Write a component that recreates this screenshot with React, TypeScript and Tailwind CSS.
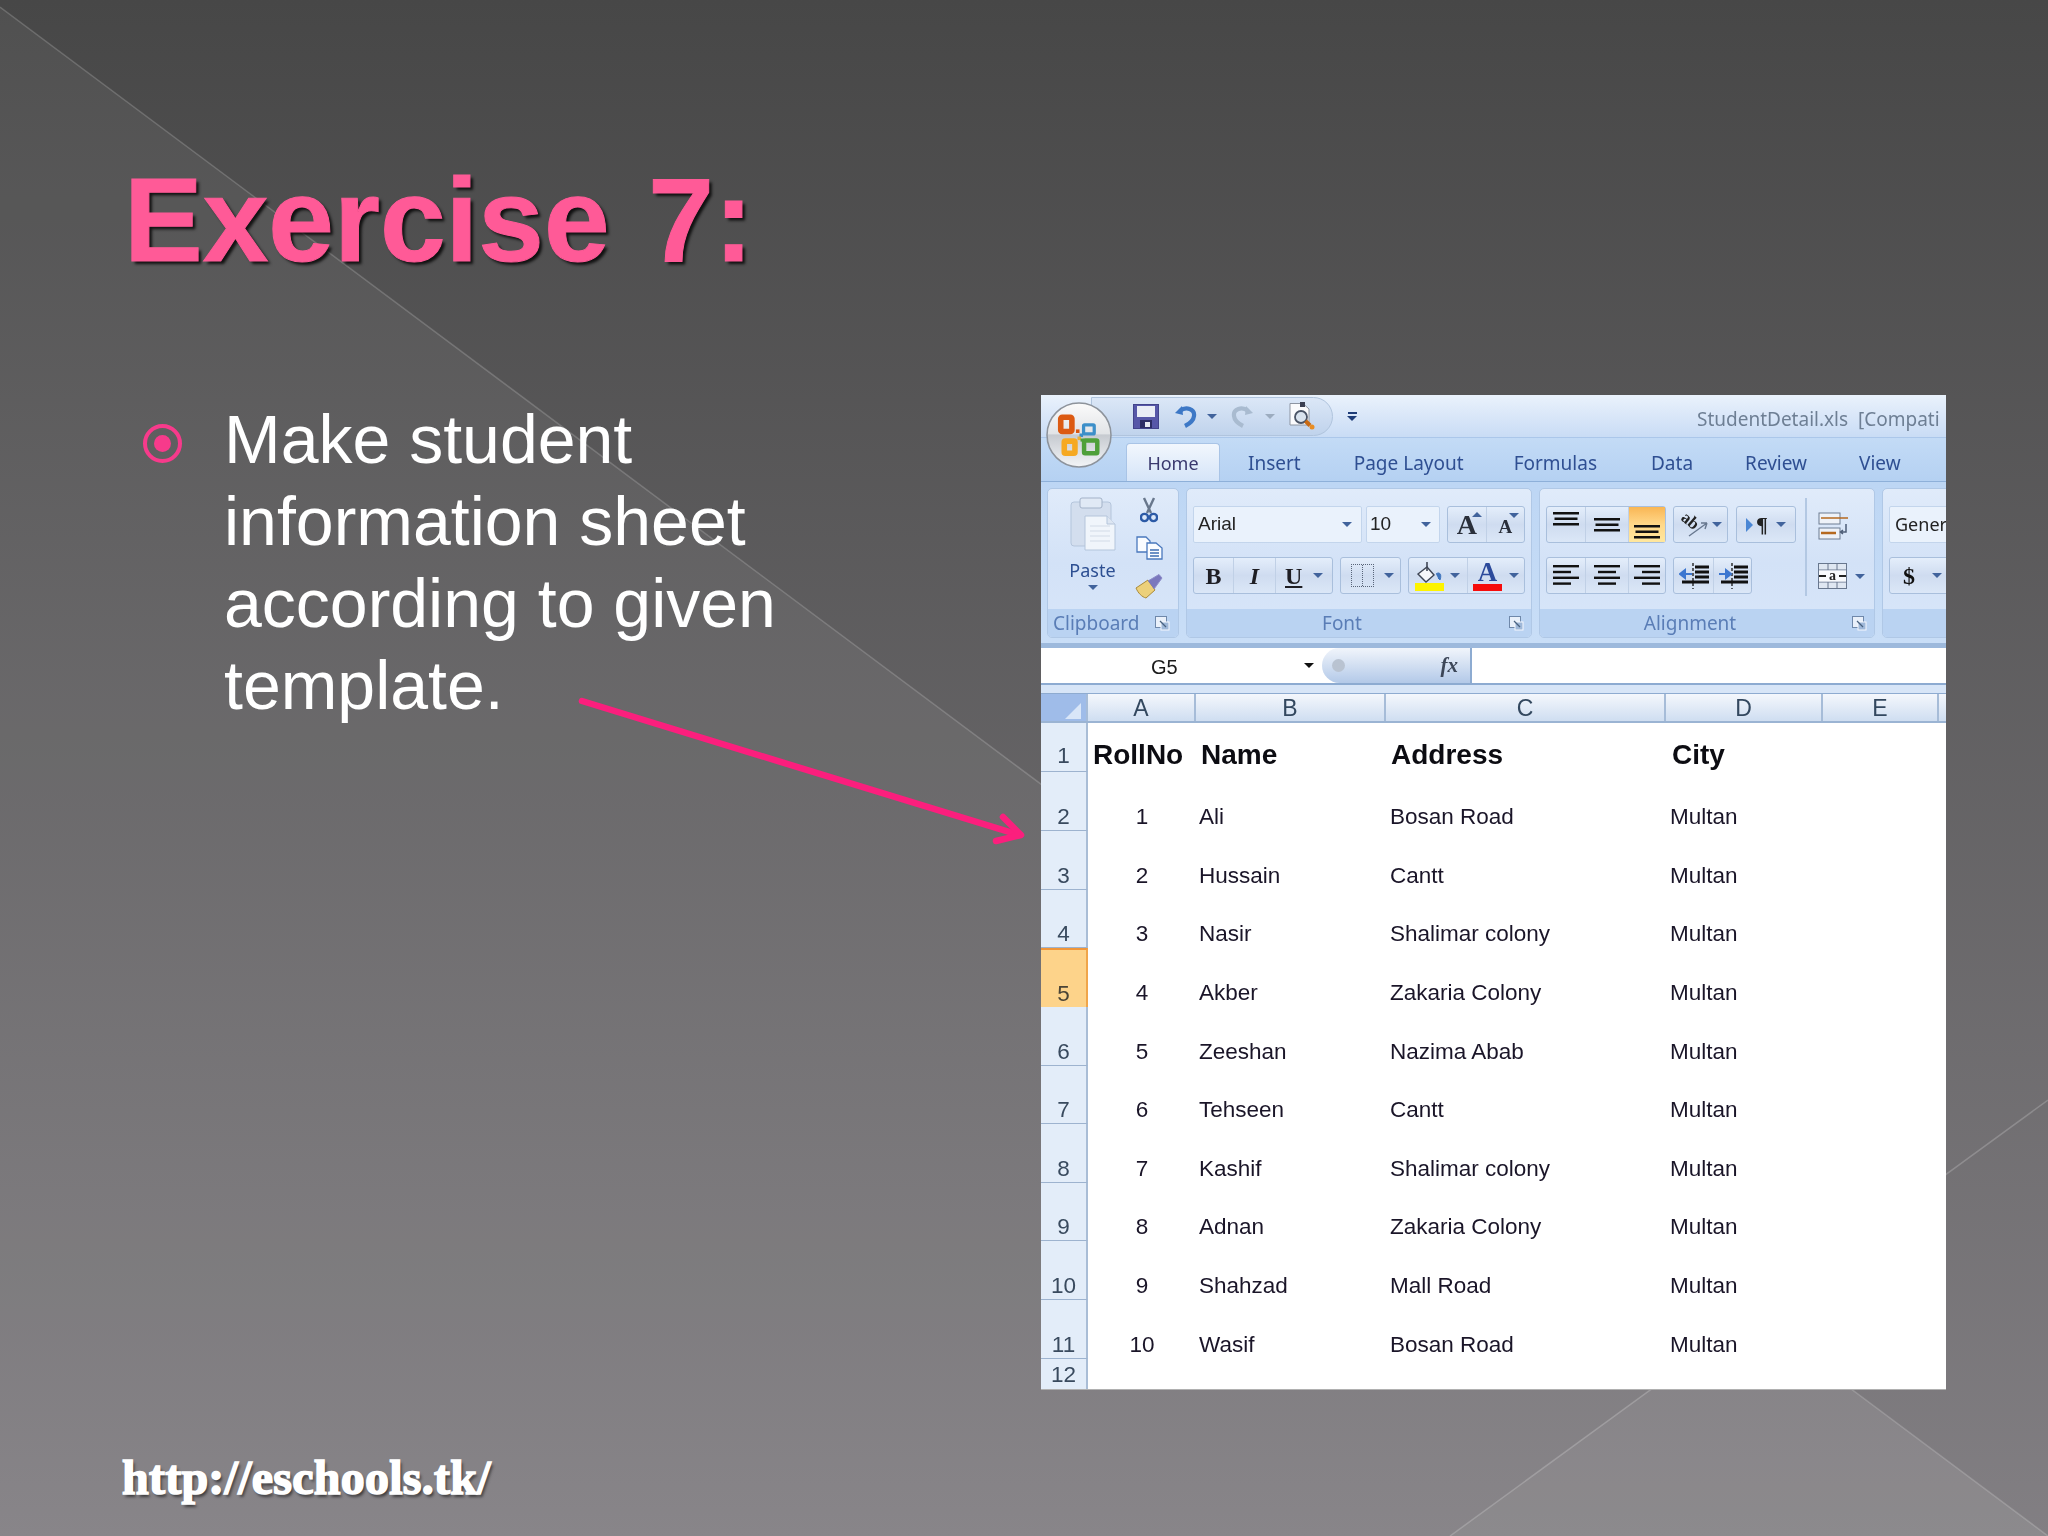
import React from "react";

const UI = "font-['Noto_Sans','Open_Sans',sans-serif]";

function Backdrop() {
  return (
    <svg className="absolute inset-0" width="2048" height="1536" viewBox="0 0 2048 1536">
      <polygon points="0,7 1752,1315 1450,1536 0,1536" fill="#fff" opacity="0.05" />
      <polygon points="1752,1315 2048,1536 1450,1536" fill="#fff" opacity="0.085" />
      <line x1="0" y1="7" x2="2048" y2="1536" stroke="#fff" strokeOpacity="0.18" strokeWidth="1.5" />
      <line x1="1450" y1="1536" x2="2048" y2="1100" stroke="#fff" strokeOpacity="0.2" strokeWidth="1.5" />
    </svg>
  );
}

function Arrow() {
  return (
    <svg className="absolute left-[570px] top-[690px]" width="470" height="165" viewBox="570 690 470 165">
      <g stroke="#fb1f7d" strokeWidth="6.5" fill="none" strokeLinecap="round" strokeLinejoin="round">
        <line x1="582" y1="701" x2="1019" y2="835" />
        <polyline points="1003,817 1021,835 996,841" />
      </g>
    </svg>
  );
}

function Caret({ up = false, color = "border-t-[#41639c]" }: { up?: boolean; color?: string }) {
  return <span className={`inline-block h-0 w-0 border-x-[5px] border-t-[5px] border-x-transparent ${color} ${up ? "rotate-180" : ""}`} />;
}

function OfficeButton() {
  return (
    <svg className="absolute left-[5px] top-[7px]" width="66" height="66" viewBox="0 0 65 65">
      <defs>
        <linearGradient id="orb" x1="0" y1="0" x2="0" y2="1">
          <stop offset="0" stopColor="#fbfbfb" />
          <stop offset="0.48" stopColor="#e2e4e7" />
          <stop offset="0.5" stopColor="#c6cad0" />
          <stop offset="1" stopColor="#f3f5f7" />
        </linearGradient>
      </defs>
      <circle cx="32.5" cy="32.5" r="31.5" fill="url(#orb)" stroke="#8d939b" strokeWidth="1.5" />
      <g fill="none">
        <rect x="14.5" y="15" width="11" height="14" rx="1.5" stroke="#dc5a12" strokeWidth="5.5" />
        <rect x="37" y="22.5" width="10.5" height="9" rx="1" stroke="#3c8fc9" strokeWidth="3.2" />
        <rect x="18" y="38.5" width="10.5" height="12" rx="1" stroke="#f6a922" strokeWidth="5.5" />
        <rect x="37.5" y="38" width="13" height="12.5" rx="1" stroke="#4fa03a" strokeWidth="4.4" />
      </g>
      <rect x="29.5" y="27" width="3.5" height="3.5" fill="#d9560f" />
      <rect x="33" y="31" width="3.5" height="3.5" fill="#3c8fc9" />
      <rect x="31" y="34" width="3.5" height="3.5" fill="#e8b23a" />
      <rect x="34" y="36" width="3" height="3" fill="#4fa03a" />
    </svg>
  );
}

function SaveIcon() {
  return (
    <svg width="26" height="25" viewBox="0 0 26 25">
      <rect x="0.5" y="0.5" width="25" height="24" fill="#5657a8" stroke="#42448c" />
      <rect x="4" y="2" width="18" height="11" fill="#e9edf6" />
      <rect x="7" y="16" width="12" height="8" fill="#2d2e66" />
      <rect x="12" y="18" width="5" height="5" fill="#e8ebf3" />
    </svg>
  );
}

function UndoIcon({ color = "#3d78c6" }: { color?: string }) {
  return (
    <svg width="23" height="24" viewBox="0 0 23 24" fill="none">
      <path d="M8 2 L1 9 L9 11 Z" fill={color} />
      <path d="M6 7 C 12 2, 21 5, 20 12 C 19.5 17, 15 20, 11 22" stroke={color} strokeWidth="4.2" />
    </svg>
  );
}

function PreviewIcon() {
  return (
    <svg width="28" height="28" viewBox="0 0 28 28" fill="none">
      <path d="M1 1.5 H14 L20 7 V23 H1 Z" fill="#fafbfd" stroke="#8d95a2" />
      <rect x="11" y="0" width="5" height="5" fill="#3a3f52" />
      <circle cx="12" cy="15" r="6" fill="#d9e3ee" stroke="#4a5466" strokeWidth="1.8" />
      <path d="M16.5 19 L21 23.5" stroke="#c96a14" strokeWidth="4" />
      <circle cx="23" cy="25" r="2.5" fill="#e98d23" />
    </svg>
  );
}

function PasteIcon() {
  return (
    <svg width="46" height="54" viewBox="0 0 46 54" fill="none">
      <rect x="1" y="5" width="40" height="44" rx="3" fill="#d3deee" stroke="#b4c5db" />
      <rect x="10" y="1" width="22" height="10" rx="2" fill="#e0e9f5" stroke="#a3b2c8" />
      <path d="M15 19 H37 L45 27 V53 H15 Z" fill="#f0f5fb" stroke="#b4c5db" />
      <path d="M37 19 V27 H45" fill="#dde6f2" stroke="#b4c5db" />
      <path d="M20 29 H40 M20 34 H40 M20 39 H40 M20 44 H40" stroke="#d2dbe8" strokeWidth="1.2" />
    </svg>
  );
}

function ScissorsIcon() {
  return (
    <svg width="18" height="26" viewBox="0 0 18 26" fill="none">
      <path d="M4 1 L11 16 M14 1 L7 16" stroke="#68778c" strokeWidth="2.4" />
      <circle cx="4.5" cy="20.5" r="3.6" stroke="#2c5aa6" strokeWidth="2.4" />
      <circle cx="13.5" cy="20.5" r="3.6" stroke="#2c5aa6" strokeWidth="2.4" />
    </svg>
  );
}

function CopyIcon() {
  return (
    <svg width="27" height="24" viewBox="0 0 27 24" fill="none">
      <path d="M1 1 H10 L14 5 V16 H1 Z" fill="#fafcff" stroke="#4a78bd" strokeWidth="1.3" />
      <path d="M11 7 H20 L26 12 V23 H11 Z" fill="#fafcff" stroke="#4a78bd" strokeWidth="1.3" />
      <path d="M14 14 H23 M14 17 H23 M14 20 H23" stroke="#3d6cb2" strokeWidth="1.5" />
    </svg>
  );
}

function BrushIcon() {
  return (
    <svg width="28" height="26" viewBox="0 0 28 26" fill="none">
      <path d="M1 15 L13 7 L20 17 L11 25 C 7 24, 3 20, 1 15 Z" fill="#ecd07a" stroke="#a98a3a" />
      <path d="M13 8 L24 1.5 L27 5 L19 16" fill="#7a78bd" stroke="#8d8cc9" />
    </svg>
  );
}

function Launcher() {
  return (
    <svg width="15" height="15" viewBox="0 0 15 15" fill="none">
      <rect x="0.5" y="0.5" width="11" height="11" fill="#e9f0fa" stroke="#6f88aa" />
      <rect x="6" y="6" width="8" height="8" fill="#9fb8d9" stroke="#f5f8fd" />
      <path d="M5 5 L11 11" stroke="#49627f" strokeWidth="1.3" />
    </svg>
  );
}

function Lines() {
  return (
    <svg width="26" height="14" viewBox="0 0 26 14">
      <rect x="0" y="0" width="26" height="2.5" fill="#111" />
      <rect x="1.5" y="5.5" width="23" height="2.5" fill="#111" />
      <rect x="0" y="11" width="26" height="2.5" fill="#111" />
    </svg>
  );
}

function AlignLines({ kind }: { kind: "left" | "center" | "right" }) {
  const rows = kind === "left"
    ? [[0, 26], [0, 18], [0, 26], [0, 18]]
    : kind === "center"
    ? [[0, 26], [4, 18], [0, 26], [4, 18]]
    : [[0, 26], [8, 18], [0, 26], [8, 18]];
  return (
    <svg width="26" height="21" viewBox="0 0 26 21">
      {rows.map(([x, w], i) => (
        <rect key={i} x={x} y={i * 5.8} width={w} height="2.4" fill="#111" />
      ))}
    </svg>
  );
}

function IndentIcon({ inward }: { inward: boolean }) {
  return (
    <svg width="30" height="28" viewBox="0 0 30 28" fill="none">
      <path d="M14 1 V27" stroke="#222" strokeWidth="1.4" strokeDasharray="3 2" />
      <path d="M16 5 H30 M16 10 H30 M16 15 H30 M3 20 H30" stroke="#111" strokeWidth="2.8" />
      {inward ? (
        <path d="M1 12 H8 M8 8 L13 12 L8 16 Z" stroke="#3b76d0" strokeWidth="2" fill="#3b76d0" />
      ) : (
        <path d="M13 12 H6 M6 8 L1 12 L6 16 Z" stroke="#3b76d0" strokeWidth="2" fill="#3b76d0" />
      )}
    </svg>
  );
}

function WrapIcon() {
  return (
    <svg width="30" height="28" viewBox="0 0 30 28" fill="none">
      <rect x="1" y="1" width="21" height="11" fill="#eef2f8" stroke="#6d7c92" />
      <rect x="1" y="16" width="21" height="11" fill="#eef2f8" stroke="#6d7c92" />
      <path d="M3 6 H30" stroke="#b5691f" strokeWidth="1.6" />
      <path d="M3 21 H18" stroke="#b5691f" strokeWidth="2.6" />
      <path d="M28 12 V20 H23 M25 18 L22.5 20 L25 22" stroke="#4d5d77" strokeWidth="1.5" />
    </svg>
  );
}

function MergeIcon() {
  return (
    <svg width="30" height="26" viewBox="0 0 30 26" fill="none">
      <rect x="0.5" y="0.5" width="28" height="25" fill="#dfe7f2" stroke="#68778e" />
      <path d="M0.5 7 H29 M0.5 19 H29 M10 0.5 V7 M19 0.5 V7 M10 19 V25.5 M19 19 V25.5" stroke="#68778e" />
      <rect x="1" y="7.5" width="27" height="11" fill="#f8fafd" />
      <text x="14.5" y="17" fontSize="14" fontFamily="Liberation Serif" fontWeight="700" textAnchor="middle" fill="#222">a</text>
      <path d="M1 13 H8 M28 13 H21" stroke="#222" strokeWidth="1.8" />
    </svg>
  );
}

function OrientIcon() {
  return (
    <svg className="overflow-visible" width="30" height="26" viewBox="0 0 30 26" fill="none">
      <text x="0" y="13" fontSize="17" fontWeight="700" fontFamily="Liberation Serif" fill="#222" transform="rotate(40 8 10)">ab</text>
      <path d="M9 24 L27 11 M27 11 L21 11 M27 11 L25 17" stroke="#68788f" strokeWidth="1.4" />
    </svg>
  );
}

function FillIcon() {
  return (
    <svg width="30" height="30" viewBox="0 0 30 30" fill="none">
      <path d="M4 13 L13 6 L20 14 L12 21 Z" fill="#f6f7fa" stroke="#3f4655" strokeWidth="1.4" />
      <path d="M13 1 V10" stroke="#3f4655" strokeWidth="1.6" />
      <path d="M22 13 C 26 10, 28 14, 26 19 L24 17" fill="#4176be" stroke="#4176be" />
      <rect x="1" y="22" width="29" height="8" fill="#fdf300" />
    </svg>
  );
}

const seg = "flex items-center justify-center border-r border-r-[#c0d0e6] h-full";
const vseg = "flex justify-center border-r border-r-[#c0d0e6] h-full";
const box = "flex h-[37px] items-center rounded-[3px] border border-[#a9bfdc] bg-gradient-to-b from-[#e4eefb] via-[#cfdcf0] to-[#dbe7f7]";
const combo = "flex h-[37px] items-center rounded-[2px] border border-[#c3d5ec] bg-[#eaf2fc]";
const group = "relative flex h-[150px] shrink-0 flex-col overflow-hidden rounded-[5px] border border-[#b0c8e6] bg-gradient-to-b from-[#e0ebfa] via-[#d3e2f7] to-[#d8e6f9]";
const band = "mt-auto flex h-[28px] items-center bg-[#bad3f2] text-[19px] text-[#5a7db6]";

function Ribbon() {
  return (
    <div className="flex h-[166px] shrink-0 gap-[7px] border-b-[5px] border-b-[#9db9dc] bg-gradient-to-b from-[#bdd6f4] to-[#c9def7] pl-[6px] pt-[6px]">
      {/* Clipboard */}
      <div className={`${group} w-[132px]`}>
        <div className="flex pt-[8px]">
          <div className="flex w-[85px] flex-col items-center pl-[4px]">
            <PasteIcon />
            <span className="mt-[7px] text-[18px] leading-[24px] text-[#2d4f92]">Paste</span>
            <span className="mt-[3px] flex"><Caret /></span>
          </div>
          <div className="flex flex-col items-center gap-[13px] pl-[2px]">
            <ScissorsIcon />
            <CopyIcon />
            <BrushIcon />
          </div>
        </div>
        <div className={`${band} justify-between pl-[5px] pr-[8px]`}>
          <span>Clipboard</span>
          <Launcher />
        </div>
      </div>

      {/* Font */}
      <div className={`${group} w-[346px]`}>
        <div className="flex gap-[4px] pl-[6px] pt-[17px]">
          <div className={`${combo} w-[169px] justify-between pl-[4px] pr-[9px]`}>
            <span className="font-['Liberation_Sans',sans-serif] text-[19px] text-[#232323]">Arial</span>
            <Caret />
          </div>
          <div className={`${combo} w-[74px] justify-between pl-[3px] pr-[8px]`}>
            <span className="font-['Liberation_Sans',sans-serif] text-[19px] text-[#232323]">10</span>
            <Caret />
          </div>
          <div className={`${box} ml-[3px] w-[78px]`}>
            <div className={`${seg} relative w-[39px] font-['Liberation_Serif',serif] text-[28px] font-bold text-[#2a2f3a]`}>
              A
              <span className="absolute right-[4px] top-[5px] flex"><Caret up /></span>
            </div>
            <div className="relative flex h-full w-[38px] items-center justify-center pt-[6px] font-['Liberation_Serif',serif] text-[19px] font-bold text-[#2a2f3a]">
              A
              <span className="absolute right-[5px] top-[6px] flex"><Caret /></span>
            </div>
          </div>
        </div>
        <div className="mt-[14px] flex gap-[7px] pl-[6px]">
          <div className={`${box} w-[140px] font-['Liberation_Serif',serif] text-[24px] font-bold text-[#1e1e24]`}>
            <div className={`${seg} w-[40px]`}>B</div>
            <div className={`${seg} w-[42px] italic`}>I</div>
            <div className="flex h-full flex-1 items-center justify-between pl-[9px] pr-[9px]">
              <span className="underline">U</span>
              <Caret />
            </div>
          </div>
          <div className={`${box} w-[61px] justify-between pl-[10px] pr-[6px]`}>
            <div className="h-[23px] w-[23px] border border-dotted border-[#59657a]">
              <div className="ml-[10px] h-full w-0 border-l border-dotted border-[#59657a]" />
            </div>
            <Caret />
          </div>
          <div className={`${box} w-[117px]`}>
            <div className={`${seg} w-[59px] justify-start gap-[6px] pl-[5px]`}>
              <FillIcon />
              <Caret />
            </div>
            <div className="flex h-full flex-1 items-center gap-[7px] pl-[5px]">
              <div className="flex w-[29px] flex-col items-center">
                <span className="h-[24px] font-['Liberation_Serif',serif] text-[27px] font-bold leading-[24px] text-[#2b4a9b]">A</span>
                <span className="h-[7px] w-[29px] bg-[#f60c0c]" />
              </div>
              <Caret />
            </div>
          </div>
        </div>
        <div className={band}>
          <span className="flex-1 pr-[12px] text-center">Font</span>
          <span className="flex pr-[7px]"><Launcher /></span>
        </div>
      </div>

      {/* Alignment */}
      <div className={`${group} w-[336px]`}>
        <div className="flex pl-[6px] pt-[9px]">
          <div className="flex w-[259px] flex-col gap-[14px] pt-[8px]">
            <div className="flex gap-[7px]">
              <div className={`${box} w-[120px]`}>
                <div className={`${vseg} w-[39px] pt-[5px]`}><Lines /></div>
                <div className={`${vseg} w-[43px] pt-[11px]`}><Lines /></div>
                <div className="flex h-full flex-1 justify-center bg-gradient-to-b from-[#f9b653] via-[#ffd889] to-[#ffe79e] pt-[18px]"><Lines /></div>
              </div>
              <div className={`${box} w-[55px] justify-center gap-[2px]`}>
                <OrientIcon />
                <Caret />
              </div>
              <div className={`${box} ml-[1px] w-[60px] justify-between pl-[9px] pr-[9px]`}>
                <span className="flex items-center font-['Liberation_Serif',serif] text-[22px] font-bold leading-[26px] text-[#222]">
                  <span className="mr-[3px] inline-block h-0 w-0 border-y-[7px] border-l-[7px] border-y-transparent border-l-[#4a86d4]" />¶
                </span>
                <Caret />
              </div>
            </div>
            <div className="flex gap-[7px]">
              <div className={`${box} w-[120px]`}>
                <div className={`${seg} w-[39px]`}><AlignLines kind="left" /></div>
                <div className={`${seg} w-[43px]`}><AlignLines kind="center" /></div>
                <div className="flex flex-1 justify-center"><AlignLines kind="right" /></div>
              </div>
              <div className={`${box} w-[79px]`}>
                <div className={`${seg} w-[40px]`}><IndentIcon inward={false} /></div>
                <div className="flex flex-1 justify-center"><IndentIcon inward /></div>
              </div>
            </div>
          </div>
          <div className="h-[98px] w-[2px] bg-[#b3c8e3]" />
          <div className="flex flex-col gap-[23px] pl-[11px] pt-[14px]">
            <WrapIcon />
            <div className="flex items-center gap-[7px]">
              <MergeIcon />
              <Caret />
            </div>
          </div>
        </div>
        <div className={band}>
          <span className="flex-1 pr-[12px] text-center">Alignment</span>
          <span className="flex pr-[7px]"><Launcher /></span>
        </div>
      </div>

      {/* Number */}
      <div className={`${group} w-[120px]`}>
        <div className="flex flex-col gap-[14px] pl-[6px] pt-[17px]">
          <div className={`${combo} w-[110px] pl-[5px]`}>
            <span className="text-[18px] text-[#222]">Gener</span>
          </div>
          <div className={`${box} w-[110px] pl-[13px]`}>
            <span className="font-['Liberation_Serif',serif] text-[24px] font-bold text-[#111]">$</span>
            <span className="ml-[17px] flex"><Caret /></span>
          </div>
        </div>
        <div className={band} />
      </div>
    </div>
  );
}

function TitleBar() {
  return (
    <div className="flex h-[43px] shrink-0 items-center border-b border-b-[#abc7ea] bg-gradient-to-b from-[#eaf2fc] to-[#c9dcf5]">
      <div className="ml-[50px] flex h-[39px] w-[242px] shrink-0 items-center rounded-r-[20px] border border-[#b0c4dd] bg-gradient-to-b from-[#dbe7f7] to-[#c0d3ec] pl-[41px]">
        <SaveIcon />
        <span className="ml-[15px] flex"><UndoIcon /></span>
        <span className="ml-[10px] flex"><Caret color="border-t-[#41639c]" /></span>
        <span className="ml-[14px] flex"><RedoIcon /></span>
        <span className="ml-[11px] flex"><Caret color="border-t-[#9cacbf]" /></span>
        <span className="ml-[14px] flex"><PreviewIcon /></span>
      </div>
      <div className="ml-[14px] flex shrink-0 flex-col items-center gap-[2px]">
        <span className="h-[2px] w-[9px] bg-[#1e3c78]" />
        <Caret color="border-t-[#1e3c78]" />
      </div>
      <span className="ml-[340px] mt-[6px] whitespace-pre text-[19px] text-[#6e7f94]">StudentDetail.xls  [Compati</span>
    </div>
  );
}

function RedoIcon() {
  return (
    <span className="flex -scale-x-100">
      <UndoIcon color="#a9bbd0" />
    </span>
  );
}

function Tabs() {
  const tabs: [string, string][] = [
    ["Insert", "ml-[28px]"],
    ["Page Layout", "ml-[53px]"],
    ["Formulas", "ml-[50px]"],
    ["Data", "ml-[54px]"],
    ["Review", "ml-[52px]"],
    ["View", "ml-[52px]"],
  ];
  return (
    <div className="flex h-[44px] shrink-0 items-end border-b border-b-[#8eb0d9] bg-gradient-to-b from-[#c3dbf6] to-[#b5d1f2] pl-[85px]">
      <div className="flex h-[38px] w-[94px] items-center justify-center rounded-t-[4px] border border-b-0 border-[#a9c4e6] bg-gradient-to-b from-[#f2f7fd] to-[#d5e4f8] pt-[1px] text-[18px] text-[#39386e]">
        Home
      </div>
      {tabs.map(([t, m]) => (
        <span key={t} className={`${m} flex h-[38px] items-center pt-[2px] text-[19px] text-[#2f4f92]`}>{t}</span>
      ))}
    </div>
  );
}

function FormulaBar() {
  return (
    <div className="flex h-[37px] shrink-0 border-b-[2px] border-b-[#8dabd1] bg-white">
      <div className="flex w-[281px] items-center">
        <span className="ml-[110px] mt-[2px] font-['Liberation_Sans',sans-serif] text-[20px] text-[#1b1b1b]">G5</span>
        <span className="ml-[126px] flex"><Caret color="border-t-[#111]" /></span>
      </div>
      <div className="flex w-[150px] items-center justify-between rounded-l-[20px] border-r-[2px] border-r-[#8dabd1] bg-gradient-to-b from-[#f1f5fb] to-[#b3c9e8] pl-[10px] pr-[12px]">
        <span className="h-[13px] w-[13px] rounded-full bg-[#b9c3d1]" />
        <span className="font-['Liberation_Serif',serif] text-[21px] font-bold italic text-[#3c4658]">fx</span>
      </div>
    </div>
  );
}

const people: [string, string, string][] = [
  ["1", "Ali", "Bosan Road"],
  ["2", "Hussain", "Cantt"],
  ["3", "Nasir", "Shalimar colony"],
  ["4", "Akber", "Zakaria Colony"],
  ["5", "Zeeshan", "Nazima Abab"],
  ["6", "Tehseen", "Cantt"],
  ["7", "Kashif", "Shalimar colony"],
  ["8", "Adnan", "Zakaria Colony"],
  ["9", "Shahzad", "Mall Road"],
  ["10", "Wasif", "Bosan Road"],
];
const rowH = ["h-[59px]", "h-[59px]", "h-[58px]", "h-[59px]", "h-[59px]", "h-[58px]", "h-[59px]", "h-[58px]", "h-[59px]", "h-[59px]"];
const gridCols = "grid grid-cols-[47px_108px_190px_280px_157px_116px_7px]";
const rowHead = "flex h-full items-end justify-center border-b border-b-[#9db3cf] border-r-2 border-r-[#a9bdd6] bg-[#e3edf9] text-[#394a5e]";

function ColHead({ t, last = false }: { t?: string; last?: boolean }) {
  return (
    <div className={`flex items-center justify-center bg-gradient-to-b from-[#f4f7fc] to-[#cfdef1] text-[23px] text-[#33485f] ${last ? "" : "border-r-2 border-r-[#a6bcd8]"}`}>
      {t}
    </div>
  );
}

function Sheet() {
  return (
    <div className="flex flex-col font-['Liberation_Sans',sans-serif] text-[22.5px] leading-[24px] text-[#1a1528]">
      <div className="h-[8px] bg-[#d7e5f7]" />
      <div className={`${gridCols} h-[30px] border-b-2 border-b-[#9bb4d3] border-t border-t-[#8eabd0]`}>
        <div className="relative border-r-2 border-r-[#a6bcd8] bg-[#9fbce9]">
          <span className="absolute bottom-[2px] right-[5px] h-0 w-0 border-b-[16px] border-l-[16px] border-b-[#d9e6f8] border-l-transparent" />
        </div>
        <ColHead t="A" />
        <ColHead t="B" />
        <ColHead t="C" />
        <ColHead t="D" />
        <ColHead t="E" />
        <ColHead last />
      </div>
      <div className={`${gridCols} h-[49px] font-bold text-[#0c0c12]`}>
        <div className={`${rowHead} pb-[3px] font-normal`}>1</div>
        <div className="flex items-end pb-[1px] pl-[5px] text-[28px] leading-[32px]">RollNo</div>
        <div className="flex items-end pb-[1px] pl-[5px] text-[28px] leading-[32px]">Name</div>
        <div className="flex items-end pb-[1px] pl-[5px] text-[28px] leading-[32px]">Address</div>
        <div className="flex items-end pb-[1px] pl-[6px] text-[28px] leading-[32px]">City</div>
      </div>
      {people.map(([n, name, addr], i) => (
        <div key={n} className={`${gridCols} ${rowH[i]}`}>
          <div className={i === 3 ? "flex h-full items-end justify-center border-t-2 border-t-[#f0963a] border-r-2 border-r-[#f0a54a] bg-[#fdd38a] pb-[1px] text-[#4a4436]" : `${rowHead} pb-[1px]`}>
            {i + 2}
          </div>
          <div className="flex items-end justify-center pb-[2px]">{n}</div>
          <div className="flex items-end pb-[2px] pl-[3px]">{name}</div>
          <div className="flex items-end pb-[2px] pl-[4px]">{addr}</div>
          <div className="flex items-end pb-[2px] pl-[4px]">Multan</div>
        </div>
      ))}
      <div className={`${gridCols} h-[31px]`}>
        <div className={`${rowHead} pb-[2px]`}>12</div>
      </div>
    </div>
  );
}

function ExcelWindow() {
  return (
    <div className={`${UI} relative mt-[395px] flex h-[995px] w-[905px] shrink-0 flex-col overflow-hidden border-b border-b-[#b0b0b0] bg-white blur-[0.4px]`}>
      <TitleBar />
      <Tabs />
      <Ribbon />
      <FormulaBar />
      <Sheet />
      <OfficeButton />
    </div>
  );
}

export default function App() {
  return (
    <div className="relative flex h-[1536px] w-[2048px] overflow-hidden bg-gradient-to-b from-[#474747] to-[#827f83] font-['Liberation_Sans',sans-serif]">
      <Backdrop />
      <div className="relative flex h-full w-[1041px] shrink-0 flex-col">
        <h1 className="ml-[124px] mt-[161px] text-[118px] font-bold leading-none text-[#ff5a97] [-webkit-text-stroke:1px_#ff5a97] [word-spacing:6px] [text-shadow:3px_3px_3px_rgba(0,0,0,0.8)]">
          Exercise 7:
        </h1>
        <div className="ml-[143px] mt-[119px] flex">
          <div className="mt-[26px] flex h-[39px] w-[39px] shrink-0 items-center justify-center rounded-full border-[4px] border-[#f73a8b]">
            <span className="h-[17px] w-[17px] rounded-full bg-[#f73a8b]" />
          </div>
          <p className="ml-[42px] w-[590px] text-[68px] leading-[82px] text-white">
            Make student information sheet according to given template.
          </p>
        </div>
        <div className="mb-[34px] ml-[122px] mt-auto font-['Liberation_Serif',serif] text-[48px] font-bold leading-none tracking-[0.25px] text-white [-webkit-text-stroke:1.6px_white] [text-shadow:2px_3px_3px_rgba(0,0,0,0.55)]">
          http://eschools.tk/
        </div>
      </div>
      <ExcelWindow />
      <Arrow />
    </div>
  );
}
